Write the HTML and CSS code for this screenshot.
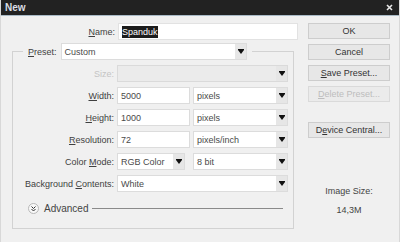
FILE: index.html
```html
<!DOCTYPE html>
<html lang="en">
<head>
  <meta charset="UTF-8">
  <title>New</title>
  <link rel="stylesheet" href="styles.css">
</head>
<body>
  <div class="dialog">
    <div class="titlebar">
      <span class="title">New</span>
      <svg class="close" width="7" height="7" viewBox="0 0 7 7">
        <path d="M1 1 L6 6 M6 1 L1 6" stroke="#e8e8e8" stroke-width="1.6"/>
      </svg>
    </div>

    <div class="main">
      <div class="form">
        <div class="row name-row">
          <span class="lbl"><u>N</u>ame:</span>
          <div class="field text name-field"><span class="sel">Spanduk</span></div>
        </div>

        <fieldset class="group">
          <legend class="preset">
            <span class="lbl-inline"><u>P</u>reset:</span>
            <div class="field select w-preset"><span>Custom</span><i class="arrow"></i></div>
          </legend>

          <div class="row">
            <span class="lbl disabled">Size:</span>
            <div class="field select disabled-field w-full"><span></span><i class="arrow"></i></div>
          </div>
          <div class="row">
            <span class="lbl"><u>W</u>idth:</span>
            <div class="field text w-num"><span>5000</span></div>
            <div class="field select w-unit"><span>pixels</span><i class="arrow"></i></div>
          </div>
          <div class="row">
            <span class="lbl"><u>H</u>eight:</span>
            <div class="field text w-num"><span>1000</span></div>
            <div class="field select w-unit"><span>pixels</span><i class="arrow"></i></div>
          </div>
          <div class="row">
            <span class="lbl"><u>R</u>esolution:</span>
            <div class="field text w-num"><span>72</span></div>
            <div class="field select w-unit"><span>pixels/inch</span><i class="arrow"></i></div>
          </div>
          <div class="row">
            <span class="lbl">Color <u>M</u>ode:</span>
            <div class="field select w-mode"><span>RGB Color</span><i class="arrow"></i></div>
            <div class="field select w-unit gap-wide"><span>8 bit</span><i class="arrow"></i></div>
          </div>
          <div class="row">
            <span class="lbl">Background <u>C</u>ontents:</span>
            <div class="field select w-full"><span>White</span><i class="arrow"></i></div>
          </div>

          <div class="advanced">
            <span class="adv-icon">
              <svg width="5" height="6" viewBox="0 0 5 6">
                <path d="M0.5 0.5 L2.5 2.5 L4.5 0.5 M0.5 3 L2.5 5 L4.5 3" stroke="#333" stroke-width="1" fill="none"/>
              </svg>
            </span>
            <span class="adv-text">Advanced</span>
            <span class="adv-line"></span>
          </div>
        </fieldset>
      </div>

      <div class="side">
        <div class="btn">OK</div>
        <div class="btn">Cancel</div>
        <div class="btn"><u>S</u>ave Preset...</div>
        <div class="btn disabled"><u>D</u>elete Preset...</div>
        <div class="btn device">D<u>e</u>vice Central...</div>
        <div class="size-info">
          <div>Image Size:</div>
          <div class="size-value">14,3M</div>
        </div>
      </div>
    </div>
  </div>
</body>
</html>
```

FILE: styles.css
```css
body {
  margin: 0;
  background: #f0f0f0;
  font-family: 'Liberation Sans', Arial, sans-serif;
  font-size: 9px;
  color: #3f3f3f;
}

u {
  text-decoration: underline;
  text-underline-offset: 1px;
}

.dialog {
  width: 400px;
  height: 242px;
  box-sizing: border-box;
  border-left: 1px solid #d8d8d8;
  border-right: 1px solid #d8d8d8;
  background: #f0f0f0;
}

.titlebar {
  height: 15px;
  background: #222222;
  border-bottom: 1px solid #a9bac6;
  display: flex;
  align-items: center;
  justify-content: space-between;
  padding: 0 6px 0 4px;
}

.title {
  color: #d9dde3;
  font-weight: bold;
  font-size: 10px;
}

.close {
  display: block;
}

.main {
  display: flex;
  padding-top: 7px;
}

.form {
  width: 299px;
}

.row {
  display: flex;
  align-items: center;
  height: 17px;
  margin-bottom: 5px;
}

.lbl {
  width: 101px;
  text-align: right;
  margin-right: 3px;
  white-space: nowrap;
  flex-shrink: 0;
}

.name-row {
  margin-bottom: 0;
}

.name-row .lbl {
  width: 114px;
}

.lbl.disabled {
  color: #c4c4c4;
}

.field {
  height: 17px;
  box-sizing: border-box;
  border: 1px solid #dcdcdc;
  background: #ffffff;
  display: flex;
  align-items: center;
  padding-left: 3px;
  color: #4a4a4a;
  position: relative;
}

.field span {
  flex: 1;
  white-space: nowrap;
}

.name-field {
  width: 180px;
  border-color: #e2e2e2;
}

.sel {
  flex: none !important;
  background: #1c1c1c;
  color: #ffffff;
  padding: 1px 0;
  line-height: 10px;
}

.select {
  padding-right: 0;
}

.arrow {
  width: 11px;
  height: 15px;
  background: #e6e6e6;
  flex-shrink: 0;
  position: relative;
}

.arrow::before {
  content: "";
  position: absolute;
  left: 3px;
  top: 6px;
  width: 0;
  height: 0;
  border-left: 3px solid transparent;
  border-right: 3px solid transparent;
  border-top: 4px solid #111;
}

.arrow::after {
  content: "";
  position: absolute;
  left: 3px;
  top: 5px;
  width: 6px;
  height: 1px;
  background: #111;
}

.disabled-field {
  background: #ebebeb;
  border-color: #dadada;
}

.w-full { width: 171px; }
.w-preset { width: 186px; }
.w-num { width: 73px; margin-right: 3px; }
.w-unit { width: 95px; }
.w-mode { width: 68px; }
.gap-wide { margin-left: 8px; }

.group {
  width: 282px;
  box-sizing: border-box;
  margin: 3px 0 0 11px;
  padding: 5px 4px 11px 0;
  border: 1px solid #d2d2d2;
}

.preset {
  margin-left: 10px;
  padding: 0 5px;
  display: flex;
  align-items: center;
}

.lbl-inline {
  margin-right: 4px;
}

.advanced {
  display: flex;
  align-items: center;
  height: 17px;
  margin-top: 8px;
  padding-left: 15px;
}

.adv-icon {
  width: 11px;
  height: 11px;
  box-sizing: border-box;
  border-radius: 50%;
  border: 1px solid #b8b8b8;
  background: #f8f8f8;
  display: flex;
  align-items: center;
  justify-content: center;
}

.adv-icon svg {
  display: block;
}

.adv-text {
  margin-left: 5px;
  font-size: 10px;
  color: #444;
}

.adv-line {
  flex: 1;
  height: 1px;
  background: #8a8a8a;
  margin: 0 6px 0 4px;
}

.side {
  margin-left: 8px;
  width: 82px;
  display: flex;
  flex-direction: column;
}

.btn {
  height: 16px;
  box-sizing: border-box;
  border: 1px solid #cdcdcd;
  background: #e7e7e7;
  margin-bottom: 5px;
  display: flex;
  align-items: center;
  justify-content: center;
  color: #333;
  white-space: nowrap;
}

.btn.disabled {
  color: #bdbdbd;
  border-color: #dadada;
  background: #ebebeb;
}

.btn.device {
  margin-top: 15px;
}

.size-info {
  margin-top: 42px;
  text-align: center;
  line-height: 12px;
  color: #444;
}

.size-value {
  margin-top: 7px;
}
```
